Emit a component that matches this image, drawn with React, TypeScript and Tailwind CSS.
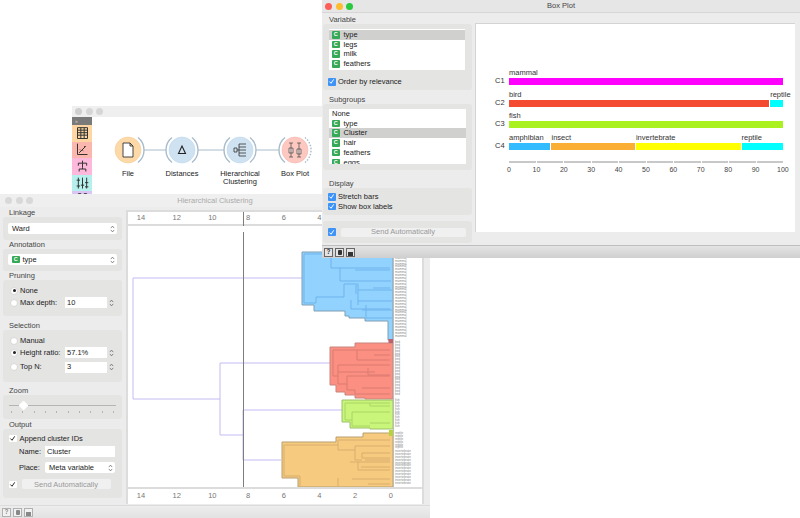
import type { ReactNode } from 'react'

const font = 'font-["Liberation_Sans",Arial,sans-serif]'

const barRows = [
  { name: 'C1', parts: [{ label: 'mammal', width: 100, color: 'bg-[#ff00ff]' }] },
  {
    name: 'C2',
    parts: [
      { label: 'bird', width: 95.3, color: 'bg-[#f44a32]' },
      { label: 'reptile', width: 4.7, color: 'bg-[#00ffff]' }
    ]
  },
  { name: 'C3', parts: [{ label: 'fish', width: 100, color: 'bg-[#aaf21f]' }] },
  {
    name: 'C4',
    parts: [
      { label: 'amphibian', width: 15.3, color: 'bg-[#33bbff]' },
      { label: 'insect', width: 30.8, color: 'bg-[#fbae34]' },
      { label: 'invertebrate', width: 38.6, color: 'bg-[#ffff00]' },
      { label: 'reptile', width: 15.3, color: 'bg-[#00ffff]' }
    ]
  }
]

const labelGroups = [
  { top: 253, count: 30, text: 'mammal', color: '#888' },
  { top: 343, count: 19, text: 'bird', color: '#888' },
  { top: 401, count: 10, text: 'fish', color: '#888' },
  { top: 434, count: 6, text: 'reptile', color: '#888' },
  { top: 452, count: 12, text: 'invertebrate', color: '#888' }
]

function Dots({ colors }: { colors: string[] }) {
  return (
    <div className="flex items-center gap-[3.5px]">
      {colors.map((c, i) => (
        <span key={i} className={`h-[7px] w-[7px] rounded-full ${c}`} />
      ))}
    </div>
  )
}

function C() {
  return (
    <span className="flex h-[7.5px] w-[7.5px] shrink-0 items-center justify-center rounded-[1px] bg-[#35a957] text-[5.5px] font-bold leading-none text-white">
      C
    </span>
  )
}

function Check({ on = true }: { on?: boolean }) {
  return (
    <span className={`flex h-[7.5px] w-[7.5px] shrink-0 items-center justify-center rounded-[1px] ${on ? 'bg-[#3d94f6]' : 'bg-white'}`}>
      <svg viewBox="0 0 8 8" className="h-[7px] w-[7px]">
        <path d="M1.5 4l2 2 3-4.5" fill="none" stroke={on ? '#fff' : '#222'} strokeWidth="1.1" />
      </svg>
    </span>
  )
}

function Radio({ on = false }: { on?: boolean }) {
  return (
    <span className="flex h-[8px] w-[8px] shrink-0 items-center justify-center rounded-full border border-[#d8d8d8] bg-white">
      {on && <span className="h-[3px] w-[3px] rounded-full bg-[#222]" />}
    </span>
  )
}

function Updown() {
  return (
    <svg viewBox="0 0 6 9" className="h-[8px] w-[5px] shrink-0">
      <path d="M1 3.4L3 1l2 2.4M1 5.6L3 8l2-2.4" fill="none" stroke="#555" strokeWidth="0.8" />
    </svg>
  )
}

function Group({ title, h, gap, children, className = '' }: { title: string; h: string; gap: string; children: ReactNode; className?: string }) {
  return (
    <div className={gap}>
      <div className="h-[9px] pl-[6px] text-[7.5px] leading-[9px] text-[#444]">{title}</div>
      <div className={`rounded-[3px] bg-[#e4e4e2] ${h} ${className}`}>{children}</div>
    </div>
  )
}

function Combo({ children, className = '' }: { children: ReactNode; className?: string }) {
  return (
    <div className={`flex h-[11px] items-center justify-between rounded-[2px] bg-white pl-[4px] pr-[2px] text-[7.5px] text-[#222] ${className}`}>
      <div className="flex items-center gap-[3px]">{children}</div>
      <Updown />
    </div>
  )
}

function Input({ value, className = '' }: { value: string; className?: string }) {
  return <div className={`flex h-[11px] items-center bg-white pl-[2px] text-[7.5px] text-[#222] ${className}`}>{value}</div>
}

function StatusBar({ dim = false }: { dim?: boolean }) {
  const box = dim ? 'border-[#b0b0b0] bg-[#f2f2f2]' : 'border-[#666] bg-[#e4e4e4]'
  const ink = dim ? 'bg-[#888]' : 'bg-[#333]'
  return (
    <div className={`flex h-[13px] shrink-0 items-center gap-[2px] border-t pl-[2px] ${dim ? 'border-[#dcdcdc] bg-gradient-to-b from-[#ededed] to-[#e2e2e2]' : 'border-[#bdbdbd] bg-gradient-to-b from-[#e4e4e4] to-[#cfcfcf]'}`}>
      <span className={`flex h-[9px] w-[9px] items-center justify-center border text-[6.5px] font-bold leading-none ${box} ${dim ? 'text-[#888]' : 'text-[#333]'}`}>?</span>
      <span className={`flex h-[9px] w-[9px] items-center justify-center border ${box}`}>
        <span className={`h-[5px] w-[4px] rounded-[1px] ${ink}`} />
      </span>
      <span className={`flex h-[9px] w-[9px] items-end justify-center border ${box}`}>
        <span className={`h-[4px] w-[5px] ${ink}`} />
      </span>
    </div>
  )
}

function ListRow({ name, active, plain }: { name: string; active?: boolean; plain?: boolean }) {
  return (
    <div className={`flex h-[9.7px] shrink-0 items-center gap-[3px] pl-[3px] text-[7.5px] leading-none text-[#222] ${active ? 'bg-[#d0d0ce]' : ''}`}>
      {!plain && <C />}
      <span className={plain ? '' : 'ml-[1px]'}>{name}</span>
    </div>
  )
}

function BoxPlotWindow() {
  return (
    <div className="absolute left-[322px] top-0 z-30 flex h-[258px] w-[478px] flex-col bg-[#ececec]">
      <div className="relative flex h-[13px] shrink-0 items-center border-b border-[#d6d6d6] bg-[#e6e6e6] pl-[3px]">
        <Dots colors={['bg-[#fc5f57]', 'bg-[#fdbc2e]', 'bg-[#28c83f]']} />
        <span className="absolute left-0 right-0 text-center text-[7.5px] text-[#444]">Box Plot</span>
      </div>
      <div className="flex flex-1">
        <div className="w-[153px] pt-[2px]">
          <div className="h-[9px] pl-[7px] text-[7.5px] leading-[9px] text-[#444]">Variable</div>
          <div className="ml-[1px] h-[66px] w-[149px] rounded-[3px] bg-[#e4e4e2] pl-[6px] pr-[7px] pt-[5px]">
            <div className="flex h-[41px] flex-col bg-white pt-[1px]">
              <ListRow name="type" active />
              <ListRow name="legs" />
              <ListRow name="milk" />
              <ListRow name="feathers" />
            </div>
            <div className="-ml-[1px] mt-[8px] flex items-center gap-[2.5px] text-[7.5px] leading-none text-[#222]">
              <Check />
              Order by relevance
            </div>
          </div>
          <div className="mt-[5px] h-[9px] pl-[7px] text-[7.5px] leading-[9px] text-[#444]">Subgroups</div>
          <div className="ml-[1px] h-[66px] w-[149px] rounded-[3px] bg-[#e4e4e2] pl-[6px] pr-[6px] pt-[5px]">
            <div className="flex h-[55px] flex-col overflow-hidden bg-white">
              <ListRow name="None" plain />
              <ListRow name="type" />
              <ListRow name="Cluster" active />
              <ListRow name="hair" />
              <ListRow name="feathers" />
              <ListRow name="eggs" />
            </div>
          </div>
          <div className="mt-[9px] h-[9px] pl-[7px] text-[7.5px] leading-[9px] text-[#444]">Display</div>
          <div className="ml-[1px] flex h-[27px] w-[149px] flex-col justify-center gap-[2px] rounded-[3px] bg-[#e4e4e2] pl-[5px] text-[7.5px] leading-none text-[#222]">
            <div className="flex items-center gap-[2.5px]">
              <Check />
              Stretch bars
            </div>
            <div className="flex items-center gap-[2.5px]">
              <Check />
              Show box labels
            </div>
          </div>
          <div className="ml-[1px] mt-[6px] flex h-[22px] w-[149px] items-center gap-[5px] rounded-[3px] bg-[#e4e4e2] pl-[5px]">
            <Check />
            <div className="flex h-[9px] w-[125px] items-center justify-center rounded-[2px] bg-[#f0f0f0] text-[7.5px] text-[#999]">Send Automatically</div>
          </div>
        </div>
        <div className="mt-[10px] flex h-[209px] w-[320px] flex-col border-l border-t border-[#d4d4d4] bg-white pl-[19px] pr-[12px] pt-[39.4px]">
          {barRows.map(row => (
            <div key={row.name} className="flex h-[21.6px] shrink-0 items-end">
              <span className="w-[14px] shrink-0 text-[7.5px] leading-[8px] text-[#333]">{row.name}</span>
              <div className="flex flex-1 gap-[1px]">
                {row.parts.map((p, i) => (
                  <div key={i} className="min-w-0" style={{ width: `${p.width}%` }}>
                    <div className="h-[10px] whitespace-nowrap text-[7.5px] leading-[9px] text-[#333]">{p.label}</div>
                    <div className={`h-[7px] ${p.color}`} />
                  </div>
                ))}
              </div>
            </div>
          ))}
          <div className="ml-[14px] mt-[11px] flex h-[2px] gap-[1px]">
            {Array.from({ length: 10 }).map((_, i) => (
              <span key={i} className="flex-1 bg-[#c8c8c8]" />
            ))}
          </div>
          <div className="ml-[14px] mt-[3px] flex justify-between text-[7px] leading-[8px] text-[#444]">
            {[0, 10, 20, 30, 40, 50, 60, 70, 80, 90, 100].map(n => (
              <span key={n} className="flex w-0 justify-center whitespace-nowrap">{n}</span>
            ))}
          </div>
        </div>
      </div>
      <StatusBar />
    </div>
  )
}

function Node({ cx, fill, ring, children, left = true, dashed = false }: { cx: number; fill: string; ring: string; children: ReactNode; left?: boolean; dashed?: boolean }) {
  return (
    <g transform={`translate(${cx} 33)`}>
      <circle r="13" fill={fill} stroke={ring} strokeWidth="0.5" />
      {children}
      {left && <path d="M-10-12.5A16 16 0 0 0-10 12.5" fill="none" stroke="#a9bccb" strokeWidth="1.4" />}
      <path d="M10-12.5A16 16 0 0 1 10 12.5" fill="none" stroke="#a9bccb" strokeWidth="1.4" strokeDasharray={dashed ? '1.5 1.5' : undefined} />
    </g>
  )
}

function Tile({ color, path }: { color: string; path: string }) {
  return (
    <div className={`flex h-[16.6px] items-center justify-center ${color}`}>
      <svg viewBox="0 0 20 18" className="h-[15px] w-[17px]">
        <path d={path} fill="none" stroke="#333" strokeWidth="1.2" />
      </svg>
    </div>
  )
}

function NodeLabel({ x, children }: { x: number; children: ReactNode }) {
  return (
    <div className="absolute top-[53px] w-[60px] -translate-x-1/2 text-center text-[7.5px] leading-[7.5px] text-[#222]" style={{ left: x }}>
      {children}
    </div>
  )
}

function CanvasWindow() {
  return (
    <div className="absolute left-[72px] top-[106px] z-10 flex h-[96px] w-[256px] flex-col bg-white">
      <div className="flex h-[11px] shrink-0 items-center bg-[#efefef] pl-[3px]">
        <Dots colors={['bg-[#cfcfcf]', 'bg-[#d6d6d6]', 'bg-[#d6d6d6]']} />
      </div>
      <div className="flex flex-1">
        <div className="flex w-[20px] shrink-0 flex-col">
          <div className="flex h-[8px] items-center bg-[#7a7a7a] pl-[3px] text-[5px] leading-none text-[#ccc]">»</div>
          <Tile color="bg-[#fdd6a4]" path="M4 2h12v13H4zM4 5h12M4 8h12M4 11h12M8 2v13M12 2v13" />
          <Tile color="bg-[#fbb6ad]" path="M4 2v13h12M6 13l8-8M7 9l1 1M10 10l1 1M12 5l1 1" />
          <Tile color="bg-[#fdb8dc]" path="M10 2v3M5 5h10M5 5v3M15 5v3M10 5v5M6 12h8M6 12v3M14 12v3M10 10v2" />
          <Tile color="bg-[#b6f0ec]" path="M5 2v13M10 2v13M15 2v13M3 5h4M8 11h4M13 8h4M3 12h4M13 13h4" />
          <Tile color="bg-[#dcc4f4]" path="M5 2h3v3H5zM12 2h3v3h-3z" />
        </div>
        <div className="relative flex-1">
          <svg viewBox="0 0 236 85" className="h-[85px] w-[236px]">
            <path d="M52 33h22M106 33h26M164 33h23" stroke="#a9bccb" strokeWidth="1" />
            <Node cx={36} fill="#fdd9a8" ring="#f4c88c" left={false}>
              <path d="M-5-7h7l3 3v11h-10zM2-7v3h3" fill="#fff" stroke="#333" strokeWidth="0.9" />
            </Node>
            <Node cx={90} fill="#cfe2f1" ring="#b9d2e6">
              <path d="M-3.5 3.5L0-4l3.5 7.5z" fill="none" stroke="#222" strokeWidth="1.1" />
            </Node>
            <Node cx={148} fill="#cfe2f1" ring="#b9d2e6">
              <path d="M-6-2h3v4h-3zM-3 0h2M-1-6h7M-1-3h7M-1 0h7M-1 3h7M-1 6h7M-1-6v12" fill="none" stroke="#333" strokeWidth="0.8" />
            </Node>
            <Node cx={203} fill="#fcc8c0" ring="#f4b1a8" dashed>
              <path d="M-4-7v14M-6-7h4M-6 7h4M-6-2h4v5h-4zM4-7v14M2-7h4M2 7h4M2-1h4v5h-4z" fill="#fde3df" stroke="#444" strokeWidth="0.7" />
            </Node>
          </svg>
          <NodeLabel x={36}>File</NodeLabel>
          <NodeLabel x={90}>Distances</NodeLabel>
          <NodeLabel x={148}>Hierarchical<br />Clustering</NodeLabel>
          <NodeLabel x={203}>Box Plot</NodeLabel>
        </div>
      </div>
    </div>
  )
}

function Axis({ className = '', children }: { className?: string; children?: ReactNode }) {
  return (
    <div className={`relative flex h-[16px] shrink-0 items-center bg-white pl-[13px] text-[7.5px] text-[#777] ${className}`}>
      {[14, 12, 10, 8, 6, 4, 2, 0].map(n => (
        <span key={n} className="w-[35.7px] shrink-0 -translate-x-1/2 text-center">{n}</span>
      ))}
      {children}
    </div>
  )
}

function Dendrogram() {
  return (
    <svg viewBox="0 232 294 255" className="h-[255px] w-[294px]">
      <g transform="translate(-128 0)">
        <path d="M133 399V278H302M133 399H220M220 363V435M220 363H330M220 435H243M243 410V460M243 410H342M243 460H281" fill="none" stroke="#c4bcf2" strokeWidth="1" />
        <path d="M302 252H393V340H388V321H365V318H349V316H345V311H314V305H302Z" fill="#92d2ff" stroke="#7f9fb4" strokeWidth="1" />
        <path d="M304 254H388M331 254V268H390M304 254V303M304 303H316V297M316 297H344V284M344 284H358V305M358 290H392M358 301H392M351 300V309H390M362 310H392M366 305V318H392M340 268V281H391M356 285V294M355 270H390M373 288H390" fill="none" stroke="#6fb3ec" strokeWidth="1" />
        <path d="M330 347H355V343H393V399H365V398H355V395H345V392H336V385H330Z" fill="#fa8f82" stroke="#c9847e" strokeWidth="1" />
        <path d="M333 350H390M333 350V376M333 376H338M338 365H390M357 350V360H390M338 365V384H347M347 376H390M347 376V390H355M362 388H390M355 390V394H390M368 368V375H390M338 372H375M374 355H390" fill="none" stroke="#dc7a70" strokeWidth="1" />
        <path d="M342 400H393V429H370V428H350V422H342Z" fill="#c8f57a" stroke="#9cc06a" strokeWidth="1" />
        <path d="M345 403H390M345 403V420H352M352 412H390M352 412V426H370M370 423H390M370 403V406H390" fill="none" stroke="#a9d663" strokeWidth="1" />
        <path d="M363 433H393V487H298V478H282V442H336V437H363Z" fill="#f6cb7f" stroke="#b79f70" strokeWidth="1" />
        <path d="M284 445H338M284 445V476M284 476H300V487M338 440H390M338 440V450M338 450H355M355 446H390M355 446V460H362M362 453H390M362 453V458H390M350 462H390M358 462V470H390M361 467H390M365 460H390M352 479H390M338 478V487M368 484H390" fill="none" stroke="#d9ae6e" strokeWidth="1" />
        <rect x="388.5" y="339" width="4.5" height="4" fill="#c0606e" />
        <rect x="389" y="430" width="4" height="6" fill="#b8d23c" />
        <path d="M393.5 232V487" stroke="#bdbdbd" strokeWidth="1" />
        <path d="M243.5 232V487" stroke="#7d7d7d" strokeWidth="1" />
        {labelGroups.map(g =>
          Array.from({ length: g.count }).map((_, i) => (
            <text key={`${g.text}-${i}`} x="395" y={g.top + i * 2.88} fontSize="3" fill={g.color}>
              {g.text}
            </text>
          ))
        )}
      </g>
    </svg>
  )
}

function ClusteringWindow() {
  return (
    <div className="absolute left-0 top-[194px] z-20 flex h-[324px] w-[430px] flex-col bg-[#ececec]">
      <div className="relative flex h-[13px] shrink-0 items-center bg-[#efefef] pl-[5px]">
        <Dots colors={['bg-[#d8d8d8]', 'bg-[#d8d8d8]', 'bg-[#d8d8d8]']} />
        <span className="absolute left-0 right-0 text-center text-[7.5px] text-[#aaa]">Hierarchical Clustering</span>
      </div>
      <div className="flex flex-1">
        <div className="w-[126px] shrink-0 pl-[3px] pr-[4px] pt-[1px]">
          <Group title="Linkage" h="h-[23px]" gap="" className="px-[5px] pt-[6px]">
            <Combo>Ward</Combo>
          </Group>
          <Group title="Annotation" h="h-[22px]" gap="" className="px-[5px] pt-[5px]">
            <Combo><C /> type</Combo>
          </Group>
          <Group title="Pruning" h="h-[36px]" gap="mb-[5px]" className="pl-[7px] pt-[5px]">
            <div className="flex h-[11px] items-center gap-[2px] text-[7.5px] text-[#222]"><Radio on /> None</div>
            <div className="mt-[1px] flex h-[11px] items-center text-[7.5px] text-[#222]">
              <Radio />
              <span className="ml-[2px] w-[45px]">Max depth:</span>
              <Input value="10" className="w-[42px]" />
              <span className="ml-[2px]"><Updown /></span>
            </div>
          </Group>
          <Group title="Selection" h="h-[52px]" gap="mb-[4px]" className="pl-[7px] pt-[5px]">
            <div className="flex h-[11px] items-center gap-[2px] text-[7.5px] text-[#222]"><Radio /> Manual</div>
            <div className="mt-[1px] flex h-[11px] items-center text-[7.5px] text-[#222]">
              <Radio on />
              <span className="ml-[2px] w-[45px]">Height ratio:</span>
              <Input value="57.1%" className="w-[42px]" />
              <span className="ml-[2px]"><Updown /></span>
            </div>
            <div className="mt-[3.5px] flex h-[11px] items-center text-[7.5px] text-[#222]">
              <Radio />
              <span className="ml-[2px] w-[45px]">Top N:</span>
              <Input value="3" className="w-[42px]" />
              <span className="ml-[2px]"><Updown /></span>
            </div>
          </Group>
          <Group title="Zoom" h="h-[24px]" gap="mb-[1px]" className="px-[6px] pt-[10px]">
            <div className="relative h-[1px] bg-[#b5b5b5]">
              <span className="absolute left-[10.5px] top-[-3px] h-[7px] w-[7px] rotate-45 rounded-[1px] bg-white" />
            </div>
            <div className="mt-[5px] flex justify-between px-[2px]">
              {Array.from({ length: 10 }).map((_, i) => (
                <span key={i} className="h-[2px] w-[1px] bg-[#b5b5b5]" />
              ))}
            </div>
          </Group>
          <Group title="Output" h="h-[69px]" gap="" className="pl-[6px] pt-[5px]">
            <div className="flex h-[9px] items-center gap-[3px] text-[7.5px] text-[#222]"><Check on={false} /> Append cluster IDs</div>
            <div className="mt-[3px] flex h-[11px] items-center text-[7.5px] text-[#222]">
              <span className="w-[36px] pl-[10px]">Name:</span>
              <Input value="Cluster" className="w-[70px]" />
            </div>
            <div className="mt-[5px] flex items-center text-[7.5px] text-[#222]">
              <span className="w-[36px] pl-[10px]">Place:</span>
              <Combo className="w-[70px]">Meta variable</Combo>
            </div>
            <div className="mt-[6px] flex items-center gap-[5px]">
              <Check on={false} />
              <div className="flex h-[10px] w-[89px] items-center justify-center rounded-[2px] bg-[#f0f0f0] text-[7.5px] text-[#999]">Send Automatically</div>
            </div>
          </Group>
        </div>
        <div className="mt-[3px] flex h-[294px] w-[298px] shrink-0 flex-col border-l-2 border-r-2 border-[#dcdcdc] bg-white">
          <Axis className="border-b-2 border-t-2 border-[#dcdcdc]">
            <span className="absolute bottom-[-2px] left-[115px] top-0 w-[1px] bg-[#7d7d7d]" />
          </Axis>
          <div className="h-[6px] shrink-0" />
          <Dendrogram />
          <Axis className="border-t-2 border-[#dcdcdc]" />
        </div>
      </div>
      <StatusBar dim />
    </div>
  )
}

export default function App() {
  return (
    <div className={`relative h-[518px] w-[800px] overflow-hidden bg-white ${font}`}>
      <CanvasWindow />
      <ClusteringWindow />
      <BoxPlotWindow />
    </div>
  )
}
